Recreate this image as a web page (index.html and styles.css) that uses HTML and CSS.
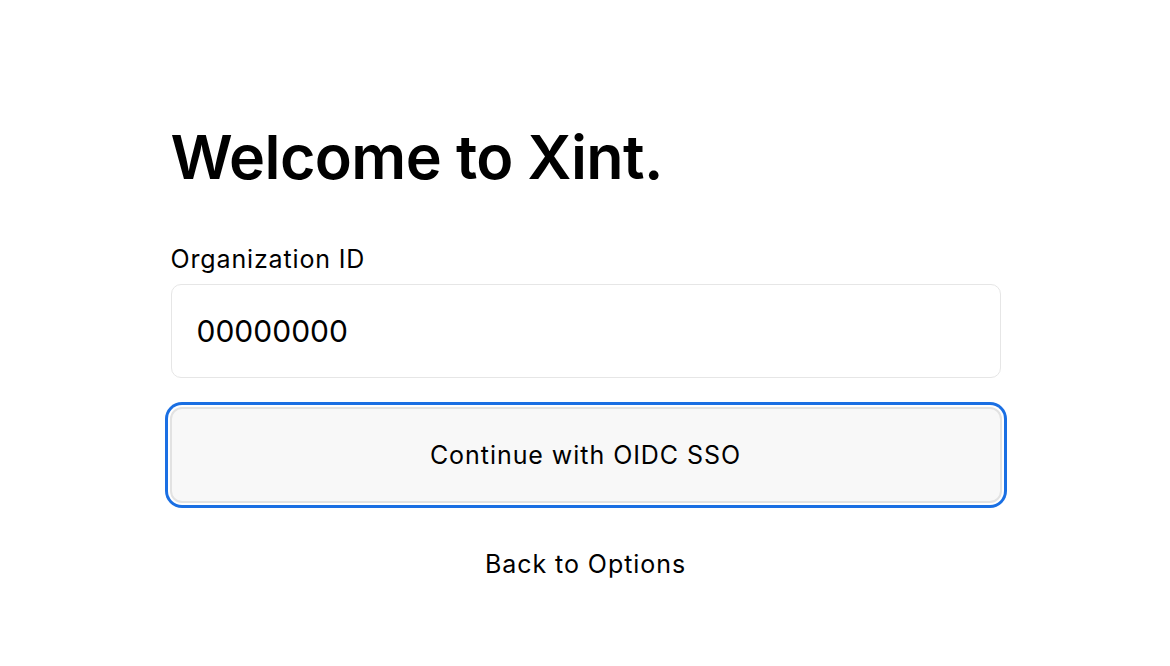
FILE: index.html
```html
<!DOCTYPE html>
<html lang="en">
<head>
<meta charset="utf-8">
<title>Welcome to Xint.</title>
<link rel="stylesheet" href="styles.css">
</head>
<body>
<main class="page">
  <section class="card">
    <h1 class="title">Welcome to Xint.</h1>
    <form class="form">
      <label class="label" for="org">Organization ID</label>
      <input class="input" id="org" type="text" value="00000000">
      <button class="btn btn-primary" type="button">Continue with OIDC SSO</button>
      <a class="back" href="#">Back to Options</a>
    </form>
  </section>
</main>
</body>
</html>
```

FILE: styles.css
```css
* { box-sizing: border-box; }
html, body { margin: 0; padding: 0; background: #ffffff; }
body {
  font-family: Inter, "Noto Sans", sans-serif;
  color: #000;
  width: 1170px;
  height: 666px;
  overflow: hidden;
}
.page {
  display: flex;
  justify-content: center;
  padding-top: 117px;
}
.card {
  width: 830px;
  margin-left: 1px;
  display: flex;
  flex-direction: column;
}
.title {
  margin: 0;
  font-size: 61px;
  font-weight: 600;
  line-height: 80px;
  letter-spacing: -0.6px;
}
.form {
  display: flex;
  flex-direction: column;
  margin-top: 47px;
}
.label {
  font-size: 25px;
  line-height: 30px;
  font-weight: 400;
  letter-spacing: 0.85px;
}
.input {
  margin-top: 10px;
  height: 94px;
  width: 100%;
  border: 1.5px solid #e6e6e6;
  border-radius: 10px;
  padding: 0 25px;
  font-family: inherit;
  font-size: 30px;
  color: #000;
  background: #fff;
  outline: none;
}
.btn {
  margin: 29px -1px 0;
  height: 96px;
  border: 2px solid #e2e2e2;
  border-radius: 12px;
  background: #f8f8f8;
  font-family: inherit;
  font-size: 25px;
  letter-spacing: 0.95px;
  color: #000;
  box-shadow: 0 0 0 2px #ffffff, 0 0 0 5px #1a6fe3;
}
.back {
  margin-top: 46px;
  align-self: center;
  font-size: 25px;
  line-height: 30px;
  letter-spacing: 0.95px;
  color: #000;
  text-decoration: none;
}
```
